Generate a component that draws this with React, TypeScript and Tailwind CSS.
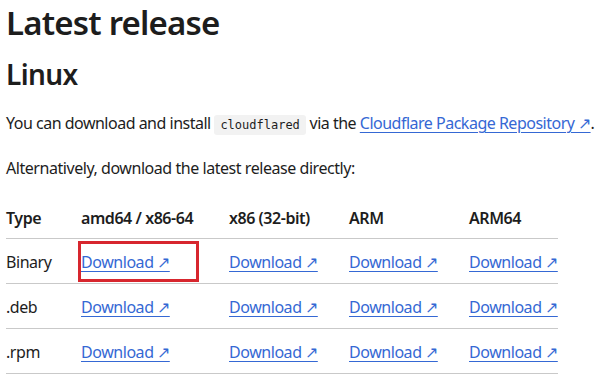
import React from "react";

const cols = ["amd64 / x86-64", "x86 (32-bit)", "ARM", "ARM64"];
const rows = ["Binary", ".deb", ".rpm"];

export default function App() {
  return (
    <div
      className="min-h-[381px] w-[603px] overflow-hidden bg-white px-[6px] text-[#1d1d1d]"
      style={{ fontFamily: '"Noto Sans", "Open Sans", sans-serif' }}
    >
      <h1 className="pt-[1px] text-[33px] font-semibold leading-[44px] tracking-[-0.8px]">Latest release</h1>
      <h2 className="mt-[10px] text-[28px] font-semibold leading-[38px] tracking-[-0.6px]">Linux</h2>
      <p className="mt-[18px] whitespace-nowrap text-[16px] leading-[24px] tracking-[-0.5px]">
        You can download and install{" "}
        <code
          className="rounded-[3px] bg-[#f2f2f2] px-[6px] py-[3px] text-[12px] tracking-normal"
          style={{ fontFamily: '"DejaVu Sans Mono", monospace' }}
        >
          cloudflared
        </code>{" "}
        via the{" "}
        <a href="#" className="text-[#3568d4] underline underline-offset-[3px] decoration-1">
          Cloudflare Package Repository ↗
        </a>
        .
      </p>
      <p className="mt-[19px] text-[16px] leading-[24px] tracking-[-0.45px]">
        Alternatively, download the latest release directly:
      </p>
      <table className="mt-[13px] w-[552px] table-fixed border-collapse text-[16px] tracking-[-0.45px]">
        <colgroup>
          <col className="w-[75px]" />
          <col className="w-[148px]" />
          <col className="w-[120px]" />
          <col className="w-[120px]" />
          <col className="w-[89px]" />
        </colgroup>
        <thead>
          <tr className="h-[45px] border-b border-[#c9c9c9]">
            <th className="p-0 pt-[5px] text-left align-middle font-semibold whitespace-nowrap">Type</th>
            {cols.map((c) => (
              <th key={c} className="p-0 pt-[5px] text-left align-middle font-semibold whitespace-nowrap">
                {c}
              </th>
            ))}
          </tr>
        </thead>
        <tbody>
          {rows.map((r, ri) => (
            <tr key={r} className="h-[45px] border-b border-[#c9c9c9]">
              <td className="p-0 pt-[3px] align-middle">{r}</td>
              {cols.map((c, ci) => (
                <td key={c} className="relative p-0 pt-[3px] align-middle whitespace-nowrap">
                  <a href="#" className="text-[#3568d4] underline underline-offset-[3px] decoration-1">
                    Download ↗
                  </a>
                  {ri === 0 && ci === 0 && (
                    <span className="pointer-events-none absolute left-[-3px] top-[2px] h-[41px] w-[121px] border-[3px] border-[#d7262e]" />
                  )}
                </td>
              ))}
            </tr>
          ))}
        </tbody>
      </table>
    </div>
  );
}
